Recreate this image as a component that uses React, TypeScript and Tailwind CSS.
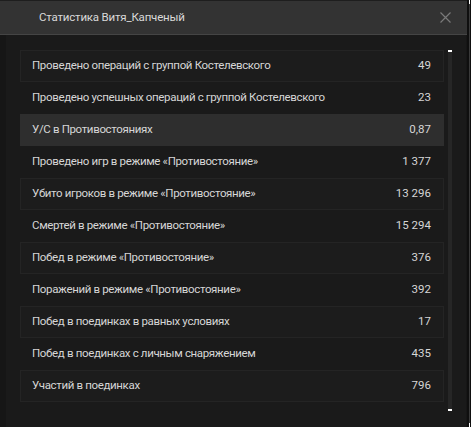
import React from "react";

const rows: [string, string][] = [
  ["Проведено операций с группой Костелевского", "49"],
  ["Проведено успешных операций с группой Костелевского", "23"],
  ["У/С в Противостояниях", "0,87"],
  ["Проведено игр в режиме «Противостояние»", "1 377"],
  ["Убито игроков в режиме «Противостояние»", "13 296"],
  ["Смертей в режиме «Противостояние»", "15 294"],
  ["Побед в режиме «Противостояние»", "376"],
  ["Поражений в режиме «Противостояние»", "392"],
  ["Побед в поединках в равных условиях", "17"],
  ["Побед в поединках с личным снаряжением", "435"],
  ["Участий в поединках", "796"],
];

export default function App() {
  return (
    <div
      className="w-[471px] h-[427px] bg-[#0f0f0f] flex overflow-hidden text-[#d6d6d6]"
      style={{ fontFamily: "Roboto, 'Noto Sans', sans-serif" }}
    >
      <div className="w-[467px] h-full flex flex-col">
        <div className="h-[35px] bg-[#333333] border-t border-t-[#1e1e1e] border-b border-b-[#454545] flex items-center pl-[39px] pr-[13px] shrink-0">
          <span className="text-[11.5px] tracking-[-0.2px] text-[#d9d9d9] flex-1">Статистика Витя_Капченый</span>
          <svg width="11" height="11" viewBox="0 0 11 11" className="mr-[3px]">
            <path d="M0.5 0.5 L10.5 10.5 M10.5 0.5 L0.5 10.5" stroke="#7a7a7a" strokeWidth="1.2" />
          </svg>
        </div>
        <div className="flex-1 bg-[#161616] flex px-[6px]">
          <div className="flex-1 bg-[#1a1a1a] flex pt-[15px] pl-[14px] pr-[14px]">
            <div className="w-[424px] flex flex-col">
              {rows.map(([label, value], i) => {
                const hl = i === 2;
                const boxed = i % 2 === 0;
                return (
                  <div
                    key={i}
                    className={
                      "h-[32px] flex items-center justify-between pl-[11px] pr-[12px] text-[11.5px] tracking-[-0.35px] border " +
                      (hl
                        ? "bg-[#2e2e2e] border-[#2e2e2e]"
                        : boxed
                        ? "bg-[#1c1c1c] border-[#242424]"
                        : "bg-transparent border-transparent")
                    }
                  >
                    <span>{label}</span>
                    <span className="tracking-[0px]">{value}</span>
                  </div>
                );
              })}
            </div>
            <div className="ml-[4px] w-[4px] h-[361px] bg-[#262626] flex flex-col justify-between">
              <div className="h-[2px] bg-white" />
              <div className="h-[2px] bg-white" />
            </div>
          </div>
        </div>
      </div>
      <div className="w-[4px] h-full flex justify-center">
        <div className="w-[1px] h-full bg-[#3a3a3a] flex flex-col justify-between">
          <div className="h-[4px] bg-white" />
          <div className="h-[4px] bg-white" />
        </div>
      </div>
    </div>
  );
}
